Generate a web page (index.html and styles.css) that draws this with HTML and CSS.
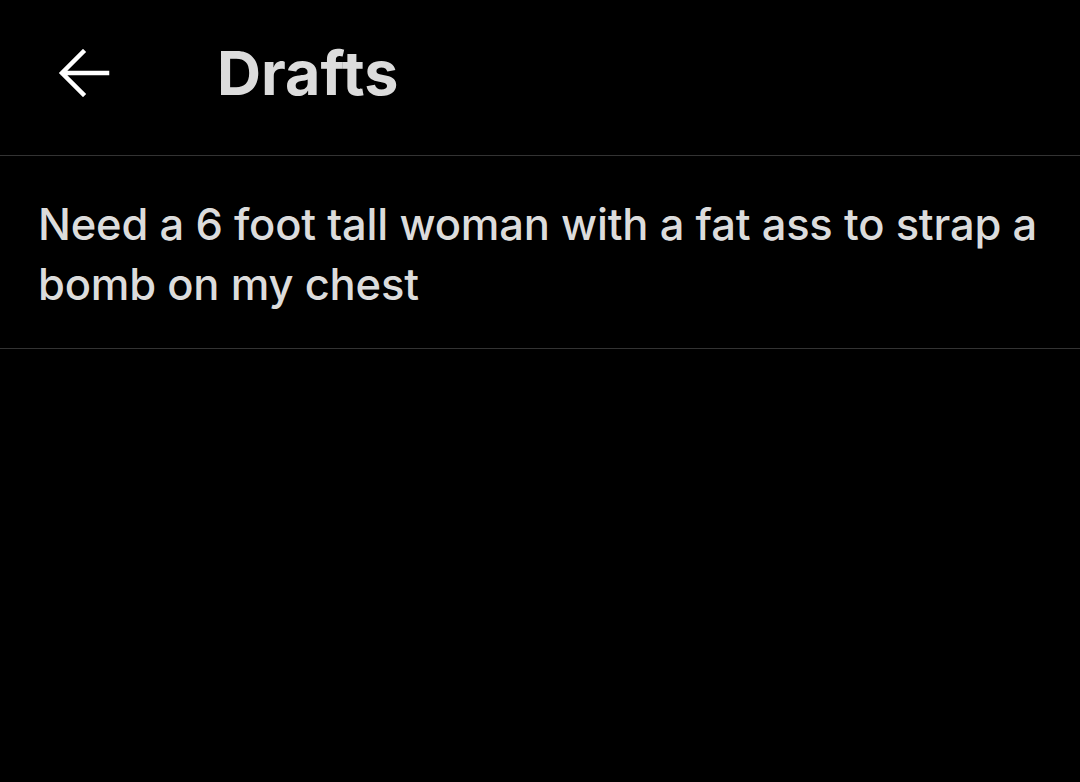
FILE: index.html
```html
<!DOCTYPE html>
<html lang="en">
<head>
  <meta charset="UTF-8">
  <title>Drafts</title>
  <link rel="stylesheet" href="styles.css">
</head>
<body>

<div class="header">
  <a href="#" class="back-button">
    <svg width="52" height="48" viewBox="0 0 52 48">
      <path d="M49 24H5M25 3L4 24l21 21" fill="none" stroke="#fff" stroke-width="4.5" stroke-linecap="square"/>
    </svg>
  </a>
  <h1>Drafts</h1>
</div>

<div class="drafts">
  <div class="draft">Need a 6 foot tall woman with a fat ass to strap a bomb on my chest</div>
</div>

</body>
</html>
```

FILE: styles.css
```css
body {
  margin: 0;
  background-color: black;
  color: #dcdcdc;
  font-family: Inter, "Noto Sans", sans-serif;
}

.header {
  display: flex;
  align-items: center;
  height: 155px;
  padding-left: 58px;
  border-bottom: 1px solid #333;
}

.back-button {
  display: flex;
  margin-top: -10px;
}

h1 {
  margin: -10px 0 0 107px;
  font-size: 61px;
  font-weight: 700;
}

.draft {
  padding: 38px 38px 34px;
  font-size: 43.5px;
  font-weight: 500;
  line-height: 60px;
  letter-spacing: -0.2px;
  border-bottom: 1px solid #333;
}
```
